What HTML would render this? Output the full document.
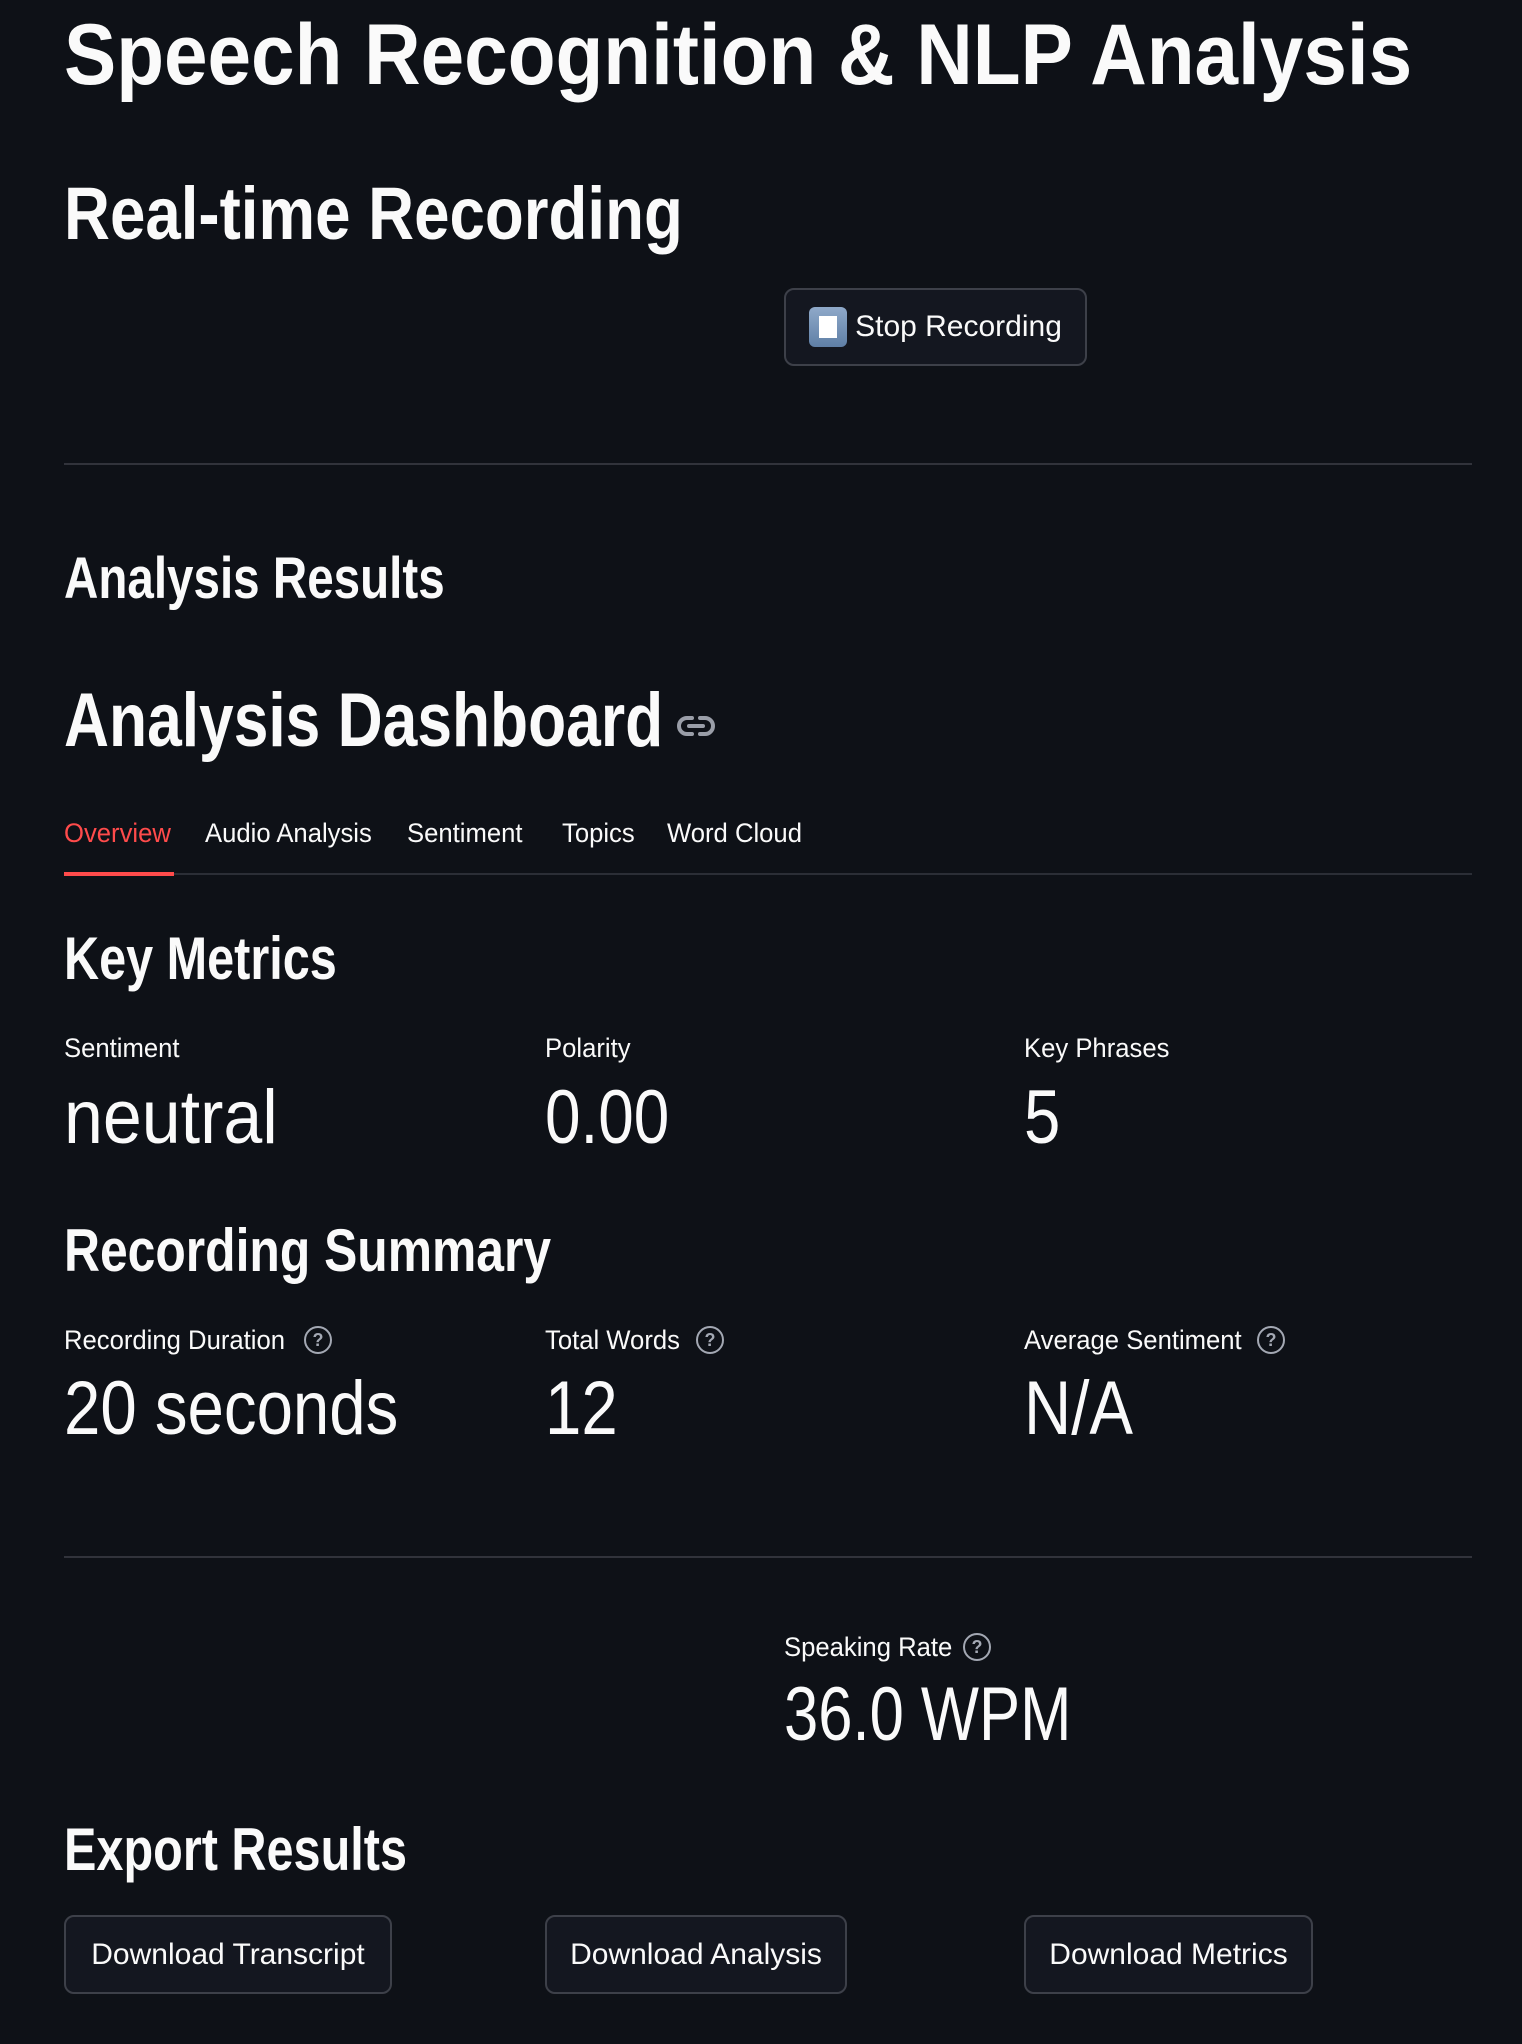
<!DOCTYPE html>
<html><head><meta charset="utf-8">
<style>
html,body{margin:0;padding:0;background:#0e1117;width:1522px;height:2044px;overflow:hidden}
body{position:relative;font-family:"Liberation Sans",sans-serif;color:#fafafa}
.t{position:absolute;white-space:nowrap;line-height:1;transform-origin:left top;transform:scaleX(0.86)}
.s{transform:scaleX(0.95)}
.b{font-weight:bold}
.hr{position:absolute;left:64px;width:1408px;height:2px;background:#31333b}
.btn{position:absolute;border:2px solid #3d4049;border-radius:10px;background:#141720;box-sizing:border-box;display:flex;align-items:center;justify-content:center}
.btn span{font-size:30px;white-space:nowrap}
.q{position:absolute;width:24px;height:24px;border:2px solid #a3a8b3;border-radius:50%;color:#a3a8b3;font-size:18px;font-weight:bold;display:flex;align-items:center;justify-content:center;line-height:1}
</style></head><body>
<div class="t b" style="left:64px;top:12px;font-size:86px;transform:scaleX(0.91)">Speech Recognition &amp; NLP Analysis</div>
<div class="t b" style="left:64px;top:177px;font-size:74px;transform:scaleX(0.86)">Real-time Recording</div>

<div class="btn" style="left:784px;top:288px;width:303px;height:78px">
  <div style="width:38px;height:40px;border-radius:6px;background:linear-gradient(#8fa9c9,#5f7fa6);display:flex;align-items:center;justify-content:center;margin-right:8px"><div style="width:18px;height:22px;background:#fff"></div></div>
  <span>Stop Recording</span>
</div>

<div class="hr" style="top:463px"></div>

<div class="t b" style="left:64px;top:550px;font-size:58px;transform:scaleX(0.82)">Analysis Results</div>
<div class="t b" style="left:64px;top:683px;font-size:76px;transform:scaleX(0.82)">Analysis Dashboard</div>
<svg style="position:absolute;left:677px;top:713px" width="38" height="26" viewBox="0 0 38 26"><g fill="none" stroke="#9a9ea8" stroke-width="4" stroke-linecap="round"><path d="M15 5H10a8 8 0 0 0 0 16h5"/><path d="M23 5h5a8 8 0 0 1 0 16h-5"/><path d="M12 13h14"/></g></svg>

<div class="t s" style="left:64px;top:820px;font-size:27px;color:#ff4b4b">Overview</div>
<div class="t s" style="left:205px;top:820px;font-size:27px">Audio Analysis</div>
<div class="t s" style="left:407px;top:820px;font-size:27px">Sentiment</div>
<div class="t s" style="left:562px;top:820px;font-size:27px">Topics</div>
<div class="t s" style="left:667px;top:820px;font-size:27px">Word Cloud</div>
<div style="position:absolute;left:64px;top:873px;width:1408px;height:2px;background:#2b2e36"></div>
<div style="position:absolute;left:64px;top:872px;width:110px;height:4px;background:#ff4b4b"></div>

<div class="t b" style="left:64px;top:929px;font-size:60px;transform:scaleX(0.81)">Key Metrics</div>
<div class="t s" style="left:64px;top:1035px;font-size:27px">Sentiment</div>
<div class="t s" style="left:545px;top:1035px;font-size:27px">Polarity</div>
<div class="t s" style="left:1024px;top:1035px;font-size:27px">Key Phrases</div>
<div class="t" style="left:64px;top:1080px;font-size:76px;transform:scaleX(0.92)">neutral</div>
<div class="t" style="left:545px;top:1080px;font-size:76px;transform:scaleX(0.84)">0.00</div>
<div class="t" style="left:1024px;top:1080px;font-size:76px">5</div>

<div class="t b" style="left:64px;top:1221px;font-size:60px;transform:scaleX(0.83)">Recording Summary</div>
<div class="t s" style="left:64px;top:1327px;font-size:27px">Recording Duration</div>
<div class="q" style="left:304px;top:1326px">?</div>
<div class="t s" style="left:545px;top:1327px;font-size:27px">Total Words</div>
<div class="q" style="left:696px;top:1326px">?</div>
<div class="t s" style="left:1024px;top:1327px;font-size:27px">Average Sentiment</div>
<div class="q" style="left:1257px;top:1326px">?</div>
<div class="t" style="left:64px;top:1371px;font-size:76px">20 seconds</div>
<div class="t" style="left:545px;top:1371px;font-size:76px">12</div>
<div class="t" style="left:1024px;top:1371px;font-size:76px">N/A</div>

<div class="hr" style="top:1556px"></div>

<div class="t s" style="left:784px;top:1634px;font-size:27px">Speaking Rate</div>
<div class="q" style="left:963px;top:1633px">?</div>
<div class="t" style="left:784px;top:1677px;font-size:76px;transform:scaleX(0.81)">36.0 WPM</div>

<div class="t b" style="left:64px;top:1820px;font-size:60px;transform:scaleX(0.81)">Export Results</div>
<div class="btn" style="left:64px;top:1915px;width:328px;height:79px"><span>Download Transcript</span></div>
<div class="btn" style="left:545px;top:1915px;width:302px;height:79px"><span>Download Analysis</span></div>
<div class="btn" style="left:1024px;top:1915px;width:289px;height:79px"><span>Download Metrics</span></div>
</body></html>
